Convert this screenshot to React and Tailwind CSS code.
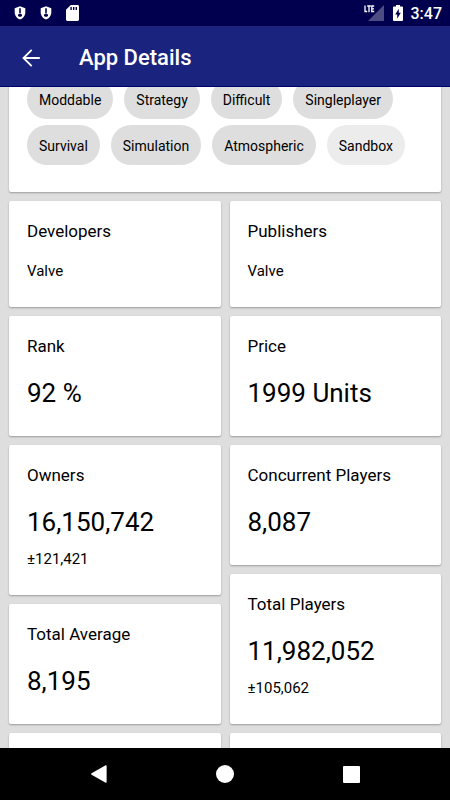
import React from 'react';

const tags = [
  ['Moddable', 'Strategy', 'Difficult', 'Singleplayer'],
  ['Survival', 'Simulation', 'Atmospheric', 'Sandbox'],
];

const leftStats = [
  { title: 'Developers', text: 'Valve' },
  { title: 'Rank', value: '92 %' },
  { title: 'Owners', value: '16,150,742', note: '±121,421' },
  { title: 'Total Average', value: '8,195' },
];

const rightStats = [
  { title: 'Publishers', text: 'Valve' },
  { title: 'Price', value: '1999 Units' },
  { title: 'Concurrent Players', value: '8,087' },
  { title: 'Total Players', value: '11,982,052', note: '±105,062' },
];

const ShieldIcon = () => (
  <svg width="12" height="14" viewBox="0 0 12 14" aria-hidden="true">
    <path d="M6 0.3 11.3 2.2V6.6C11.3 9.8 9 12.6 6 13.6 3 12.6 0.7 9.8 0.7 6.6V2.2Z" fill="#fff" />
    <path d="M5.2 2.2H6.8V7.4H5.2Z" fill="#00004f" />
    <path d="M4 8.6C4.6 7.8 7.4 7.8 8 8.6V10C7.4 11 4.6 11 4 10Z" fill="#00004f" />
  </svg>
);

const SdCardIcon = () => (
  <svg width="13" height="16" viewBox="0 0 13 16" aria-hidden="true">
    <path d="M4.8 0H11.6Q13 0 13 1.4V14.6Q13 16 11.6 16H1.4Q0 16 0 14.6V4.8Z" fill="#fff" />
    <path d="M4.4 2H5.8V5H4.4ZM7 2H8.4V5H7ZM9.6 2H11V5H9.6Z" fill="#00004f" />
  </svg>
);

const SignalIcon = () => (
  <svg width="20" height="16" viewBox="0 0 20 16" aria-hidden="true">
    <path d="M20 0V16H4Z" fill="#fff" opacity="0.3" />
    <path d="M0 0H10.5V8H0Z" fill="#00004f" />
    <path
      d="M1 0.4V6.5H3.2M3.2 1H6.8M5 1V7.2M10.2 1H7.8V6.5H10.2M7.8 3.8H10"
      stroke="#fff"
      strokeWidth="1.3"
      fill="none"
    />
  </svg>
);

const BatteryIcon = () => (
  <svg width="10" height="16" viewBox="0 0 10 16" aria-hidden="true">
    <path d="M3 0H7V1.6H9Q10 1.6 10 2.6V15Q10 16 9 16H1Q0 16 0 15V2.6Q0 1.6 1 1.6H3Z" fill="#fff" />
    <path d="M5.8 3.8V7.8H7.8L4.2 13.8V9.6H2.2Z" fill="#00004f" />
  </svg>
);

const StatusBar = () => (
  <div className="flex h-[26px] shrink-0 items-center justify-between bg-[#00004f] pl-[14px] pr-2">
    <div className="flex items-center gap-[14px]">
      <ShieldIcon />
      <ShieldIcon />
      <SdCardIcon />
    </div>
    <div className="flex items-center">
      <SignalIcon />
      <span className="ml-[9px] mr-2">
        <BatteryIcon />
      </span>
      <span className="pt-[2px] text-base font-medium leading-6 text-white">3:47</span>
    </div>
  </div>
);

const AppBar = () => (
  <header className="flex h-[61px] shrink-0 items-center border-b border-[#00006a] bg-[#1a237e] pt-[3px] text-white">
    <button type="button" aria-label="Back" className="flex w-[62px] justify-center">
      <svg width="18" height="18" viewBox="0 0 18 18" fill="none" stroke="#fff" strokeWidth="1.8" aria-hidden="true">
        <path d="M17.8 9H1.6M9.7 0.8 1.5 9 9.7 17.2" />
      </svg>
    </button>
    <h1 className="ml-[17px] text-[22px] font-medium leading-7">App Details</h1>
  </header>
);

const Card = ({ children, className = '' }) => (
  <section className={`rounded-[2px] bg-white px-[18px] pt-[18px] shadow-[0_1px_2px_rgba(0,0,0,0.3)] ${className}`}>
    {children}
  </section>
);

const StatCard = ({ title, text, value, note }) => (
  <Card className="pb-6">
    <h2 className="text-[17px] leading-6">{title}</h2>
    {text && <p className="mt-4 text-[15px] leading-6">{text}</p>}
    {value && <p className="mt-4 text-[26px] leading-[38px]">{value}</p>}
    {note && <p className="mt-[6px] text-[15px] leading-6">{note}</p>}
  </Card>
);

const StatColumn = ({ stats }) => (
  <div className="flex min-w-0 flex-1 flex-col gap-[9px]">
    {stats.map((stat) => (
      <StatCard key={stat.title} {...stat} />
    ))}
    <Card className="pb-24" />
  </div>
);

const NavBar = () => (
  <nav className="grid h-[52px] shrink-0 grid-cols-3 bg-black px-9">
    <button type="button" aria-label="Back" className="flex items-center justify-center">
      <svg width="16" height="18" viewBox="0 0 16 18" aria-hidden="true">
        <path d="M14.6 0.3Q15.6 0 15.6 1V17Q15.6 18 14.6 17.7L0.6 9.8Q-0.4 9 0.6 8.2Z" fill="#fff" />
      </svg>
    </button>
    <button type="button" aria-label="Home" className="flex items-center justify-center">
      <span className="size-[18px] rounded-full bg-white" />
    </button>
    <button type="button" aria-label="Recent apps" className="flex items-center justify-center">
      <span className="size-[17px] rounded-[1px] bg-white" />
    </button>
  </nav>
);

const App = () => {
  return (
    <div className="flex h-screen flex-col bg-[#dedede] font-[Roboto,sans-serif] text-black">
      <StatusBar />
      <AppBar />
      <main className="min-h-0 flex-1 overflow-hidden px-[9px]">
        <Card className="-mt-[26px] pb-[27px]">
          <div className="flex flex-col gap-[6px]">
            {tags.map((row) => (
              <div key={row[0]} className="flex gap-[11px]">
                {row.map((tag) => (
                  <button
                    key={tag}
                    type="button"
                    className={`h-10 rounded-full px-3 pt-[2px] text-sm ${
                      tag === 'Sandbox' ? 'bg-[#ececec]' : 'bg-[#dedede]'
                    }`}
                  >
                    {tag}
                  </button>
                ))}
              </div>
            ))}
          </div>
        </Card>
        <div className="mt-[9px] flex gap-[9px]">
          <StatColumn stats={leftStats} />
          <StatColumn stats={rightStats} />
        </div>
      </main>
      <NavBar />
    </div>
  );
};

export default App;
